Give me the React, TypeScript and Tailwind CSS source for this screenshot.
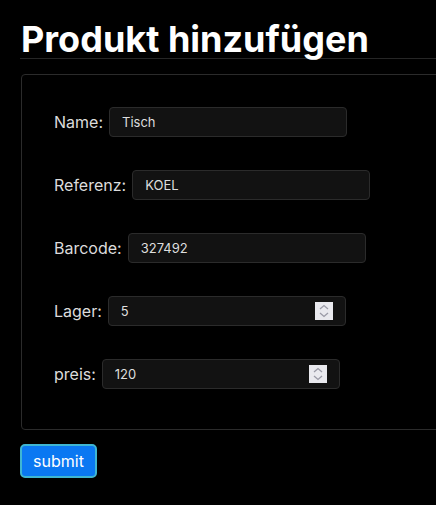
import React from "react";

function Spinner() {
  return (
    <div className="absolute right-[12px] top-1/2 -translate-y-1/2 w-[18px] h-[18px] bg-[#e9e9ee] flex flex-col items-center justify-center gap-[2px]">
      <svg width="10" height="6" viewBox="0 0 10 6" fill="none">
        <path d="M1 5L5 1.5L9 5" stroke="#9a9aa6" strokeWidth="1.3" />
      </svg>
      <svg width="10" height="6" viewBox="0 0 10 6" fill="none">
        <path d="M1 1L5 4.5L9 1" stroke="#9a9aa6" strokeWidth="1.3" />
      </svg>
    </div>
  );
}

function Field({ label, value, number }: { label: string; value: string; number?: boolean }) {
  return (
    <div className="flex items-center h-[30px]">
      <label className="text-[16px] text-[#dcdcdc] mr-[6px]">{label}</label>
      <div className="relative w-[238px] h-[30px] bg-[#121212] border border-[#2b2b2b] rounded-[4px]">
        <input
          readOnly
          value={value}
          className="w-full h-full bg-transparent pl-[12px] text-[13px] text-[#dedede] outline-none"
          style={{ fontFamily: "Inter, sans-serif" }}
        />
        {number && <Spinner />}
      </div>
    </div>
  );
}

export default function App() {
  return (
    <div
      className="bg-black min-h-[505px] w-[436px] overflow-hidden pl-[20px] pt-[21px]"
      style={{ fontFamily: "Inter, 'Noto Sans', sans-serif" }}
    >
      <h1 className="text-[36px] font-bold text-white leading-[36px] pl-[1px] border-b border-[#262626] pb-[1px]">
        Produkt hinzufügen
      </h1>
      <fieldset className="mt-[15px] ml-[1px] w-[440px] border border-[#2b2b2b] rounded-[4px] pl-[32px] pt-[32px] pb-[40px] flex flex-col gap-[33px]">
        <Field label="Name:" value="Tisch" />
        <Field label="Referenz:" value="KOEL" />
        <Field label="Barcode:" value="327492" />
        <Field label="Lager:" value="5" number />
        <Field label="preis:" value="120" number />
      </fieldset>
      <button className="mt-[14px] w-[77px] h-[34px] bg-[#0a78f2] border-2 border-[#3fb6d2] rounded-[5px] text-[16px] text-white">
        submit
      </button>
    </div>
  );
}
